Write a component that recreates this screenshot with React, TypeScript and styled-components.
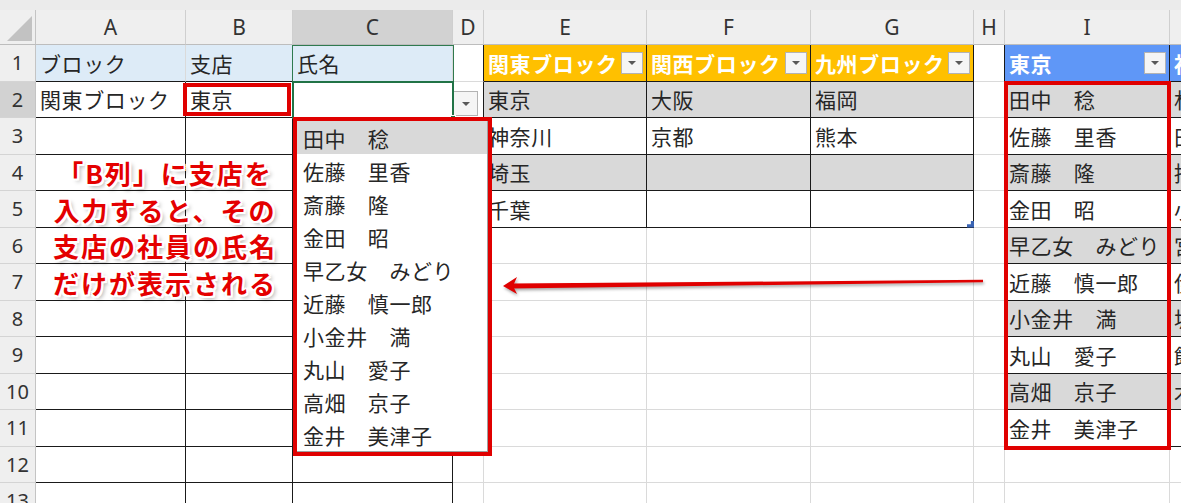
import styled, { createGlobalStyle } from 'styled-components'

// ── Sheet geometry ────────────────────────────────────────────────────────────

const COLS = ['A', 'B', 'C', 'D', 'E', 'F', 'G', 'H', 'I', 'J']
const WIDTHS = [150, 107, 160, 31, 163, 164, 163, 31, 165, 100]
const ROW_COUNT = 13
const ROW_H = 36.5
const GRID = '#dadada'
const INK = '#1a1a1a'

const NAMES = [
  '田中　稔', '佐藤　里香', '斎藤　隆', '金田　昭', '早乙女　みどり',
  '近藤　慎一郎', '小金井　満', '丸山　愛子', '高畑　京子', '金井　美津子',
]
const KANAGAWA = ['林　健太', '田村　聡', '持田　翼', '小林　舞', '宮本　翔', '伊藤　誠', '坂本　亮', '飯田　光', '木村　卓', '']

type Tone = 'blank' | 'label' | 'orange' | 'band' | 'blue'

const TONES: Record<Tone, { bg: string; fg: string; bold: boolean }> = {
  blank: { bg: '#fff', fg: '#262626', bold: false },
  label: { bg: '#ddebf7', fg: '#262626', bold: false },
  orange: { bg: '#ffc000', fg: '#fff', bold: true },
  band: { bg: '#d9d9d9', fg: '#262626', bold: false },
  blue: { bg: '#5f97f7', fg: '#fff', bold: true },
}

interface Spec { text?: string; tone?: Tone; filter?: boolean; dropdown?: boolean; handle?: boolean }

function buildCells(): Record<string, Spec> {
  const m: Record<string, Spec> = {
    A1: { text: 'ブロック', tone: 'label' },
    B1: { text: '支店', tone: 'label' },
    C1: { text: '氏名', tone: 'label' },
    A2: { text: '関東ブロック' },
    B2: { text: '東京' },
    D2: { dropdown: true },
    E1: { text: '関東ブロック', tone: 'orange', filter: true },
    F1: { text: '関西ブロック', tone: 'orange', filter: true },
    G1: { text: '九州ブロック', tone: 'orange', filter: true },
    E2: { text: '東京', tone: 'band' }, F2: { text: '大阪', tone: 'band' }, G2: { text: '福岡', tone: 'band' },
    E3: { text: '神奈川' }, F3: { text: '京都' }, G3: { text: '熊本' },
    E4: { text: '埼玉', tone: 'band' }, F4: { tone: 'band' }, G4: { tone: 'band' },
    E5: { text: '千葉' }, G5: { handle: true },
    I1: { text: '東京', tone: 'blue', filter: true },
    J1: { text: '神奈川', tone: 'blue', filter: true },
  }
  NAMES.forEach((n, i) => {
    const tone: Tone = i % 2 === 0 ? 'band' : 'blank'
    m[`I${i + 2}`] = { text: n, tone }
    m[`J${i + 2}`] = { text: KANAGAWA[i], tone }
  })
  return m
}

const CELLS = buildCells()

function boxed(c: number, r: number) {
  if (c >= 0 && c <= 2 && r >= 2) return true
  if (c >= 4 && c <= 6 && r >= 1 && r <= 5) return true
  if (c >= 8 && c <= 9 && r >= 1 && r <= 11) return true
  return false
}

// ── Styled components ─────────────────────────────────────────────────────────

const GlobalStyle = createGlobalStyle`
  *, *::before, *::after { box-sizing: border-box; }
  html, body { margin: 0; padding: 0; background: #fff; }
  body { font-family: "Noto Sans CJK JP", "Noto Sans", sans-serif; }
`

const Frame = styled.div`
  position: relative;
  width: 1194px;
  height: 503px;
  overflow: hidden;
  background: #fff;
`

const Viewport = styled.div`
  width: 1181px;
  overflow: hidden;
`

const TopStrip = styled.div`
  height: 10px;
  background: #ebebeb;
`

const Sheet = styled.div`
  display: grid;
  grid-template-columns: 36px ${WIDTHS.map(w => `${w}px`).join(' ')};
  grid-template-rows: 35px repeat(${ROW_COUNT}, ${ROW_H}px);
`

const Corner = styled.div`
  position: relative;
  background: #efefef;
  border-right: 1px solid #c4c4c4;
  border-bottom: 1px solid #bdbdbd;
  &::after {
    content: '';
    position: absolute;
    right: 3px;
    bottom: 3px;
    border-left: 25px solid transparent;
    border-bottom: 25px solid #c2c2c2;
  }
`

const ColHead = styled.div<{ $sel: boolean }>`
  display: flex;
  align-items: center;
  justify-content: center;
  background: ${p => (p.$sel ? '#d2d2d2' : '#efefef')};
  border-right: 1px solid #cfcfcf;
  border-bottom: 1px solid #bdbdbd;
  font-family: "Noto Sans", "Liberation Sans", sans-serif;
  font-size: 21px;
  color: #333;
  overflow: hidden;
`

const RowHead = styled.div<{ $sel: boolean }>`
  display: flex;
  align-items: center;
  justify-content: center;
  background: ${p => (p.$sel ? '#d2d2d2' : '#efefef')};
  border-right: 1px solid #c4c4c4;
  border-bottom: 1px solid #d4d4d4;
  font-family: "Noto Sans", "Liberation Sans", sans-serif;
  font-size: 20px;
  color: #333;
`

const Cell = styled.div<{ $bg: string; $fg: string; $bold: boolean; $r: string; $b: string; $flush: boolean; $handle: boolean }>`
  position: relative;
  display: flex;
  align-items: ${p => (p.$flush ? 'flex-end' : 'center')};
  gap: 3px;
  min-width: 0;
  overflow: ${p => (p.$handle ? 'visible' : 'hidden')};
  white-space: nowrap;
  padding: ${p => (p.$flush ? '0 0 1px 0' : '0 3px 0 4px')};
  background: ${p => p.$bg};
  color: ${p => p.$fg};
  font-weight: ${p => (p.$bold ? 700 : 400)};
  font-size: 21px;
  letter-spacing: 0.6px;
  border-right: 1px solid ${p => p.$r};
  border-bottom: 1px solid ${p => p.$b};
  ${p => p.$handle && `
    &::after {
      content: '';
      position: absolute;
      right: -1px;
      bottom: -1px;
      width: 7px;
      height: 7px;
      background: #3a64b4;
      clip-path: polygon(100% 0, 100% 100%, 0 100%, 0 55%, 55% 55%, 55% 0);
    }
  `}
`

const CellText = styled.span`
  flex: 1;
  min-width: 0;
  overflow: hidden;
`

const SmallButton = styled.span<{ $size: number }>`
  flex: none;
  width: ${p => p.$size}px;
  height: ${p => p.$size}px;
  display: flex;
  align-items: center;
  justify-content: center;
  background: #f5f5f5;
  border: 1px solid #b3b3b3;
`

const Caret = styled.span`
  width: 0;
  height: 0;
  border-left: 4.5px solid transparent;
  border-right: 4.5px solid transparent;
  border-top: 4.5px solid #595959;
`

// overlays

const Selection = styled.div`
  position: absolute;
  left: 292px;
  top: 80.5px;
  width: 162px;
  height: 38.5px;
  border: 2px solid #217346;
  pointer-events: none;
  &::after {
    content: '';
    position: absolute;
    right: -4px;
    bottom: -4px;
    width: 6px;
    height: 6px;
    background: #217346;
    border: 1px solid #fff;
  }
`

const HeaderOutline = styled.div`
  position: absolute;
  left: 292px;
  top: 45px;
  width: 162px;
  height: 37px;
  border: 1px solid #2f7a4f;
  pointer-events: none;
`

const RedFrame = styled.div`
  position: absolute;
  border: 4px solid #e00000;
  pointer-events: none;
`

const BranchMark = styled(RedFrame)`
  left: 183px;
  top: 83px;
  width: 108px;
  height: 33px;
`

const TokyoMark = styled(RedFrame)`
  left: 1004px;
  top: 81px;
  width: 167px;
  height: 369px;
`

const DropList = styled.div`
  position: absolute;
  left: 293px;
  top: 117px;
  width: 199px;
  border: 4px solid #e00000;
  background: #fff;
`

const DropInner = styled.ul`
  margin: 0;
  padding: 0;
  list-style: none;
  border-right: 1px solid #a0a0a0;
  border-bottom: 1px solid #a0a0a0;
  background: #fff;
`

const DropItem = styled.li<{ $active: boolean }>`
  height: 33px;
  display: flex;
  align-items: center;
  padding-left: 6px;
  font-size: 21px;
  letter-spacing: 0.6px;
  color: #262626;
  background: ${p => (p.$active ? '#d9d9d9' : '#fff')};
  white-space: nowrap;
`

const Note = styled.div`
  position: absolute;
  left: 36px;
  top: 155px;
  width: 258px;
  text-align: center;
  font-family: "Noto Sans CJK JP", sans-serif;
  font-size: 26px;
  font-weight: 700;
  line-height: 36.5px;
  letter-spacing: 2px;
  color: #e40000;
  white-space: nowrap;
  text-shadow:
    -2px -2px 0 #fff, 2px -2px 0 #fff, -2px 2px 0 #fff, 2px 2px 0 #fff,
    0 -2px 0 #fff, 0 2px 0 #fff, -2px 0 0 #fff, 2px 0 0 #fff,
    3px 3px 4px rgba(0, 0, 0, 0.35);
`

const NoteLine = styled.div``

const Arrow = styled.svg`
  position: absolute;
  left: 495px;
  top: 268px;
  overflow: visible;
  filter: drop-shadow(1px 2px 1.5px rgba(0, 0, 0, 0.35));
`

// ── Component ─────────────────────────────────────────────────────────────────

export default function App() {
  const rows = Array.from({ length: ROW_COUNT }, (_, i) => i + 1)

  return (
    <>
      <GlobalStyle />
      <Frame>
        <Viewport>
          <TopStrip />
          <Sheet>
            <Corner />
            {COLS.map(c => (
              <ColHead key={c} $sel={c === 'C'}>{c}</ColHead>
            ))}
            {rows.map(r => (
              <Row key={r} r={r} />
            ))}
          </Sheet>
        </Viewport>

        <HeaderOutline />
        <Selection />
        <BranchMark />
        <TokyoMark />

        <DropList>
          <DropInner>
            {NAMES.map((n, i) => (
              <DropItem key={n} $active={i === 0}>{n}</DropItem>
            ))}
          </DropInner>
        </DropList>

        <Note>
          <NoteLine>「B列」に支店を</NoteLine>
          <NoteLine>入力すると、その</NoteLine>
          <NoteLine>支店の社員の氏名</NoteLine>
          <NoteLine>だけが表示される</NoteLine>
        </Note>

        <Arrow width="495" height="30" viewBox="0 0 495 30">
          <polygon points="16,15.6 488,11.8 488,14.2 16,20.6" fill="#e00000" />
          <polygon points="8,18 22,9 18,18 22,26" fill="#e00000" />
        </Arrow>
      </Frame>
    </>
  )
}

function Row({ r }: { r: number }) {
  return (
    <>
      <RowHead $sel={r === 2}>{r}</RowHead>
      {COLS.map((c, ci) => {
        const spec = CELLS[`${c}${r}`] ?? {}
        const tone = TONES[spec.tone ?? 'blank']
        const right = boxed(ci, r) || boxed(ci + 1, r) ? INK : GRID
        const bottom = boxed(ci, r) || boxed(ci, r + 1) ? INK : GRID
        return (
          <Cell
            key={c}
            $bg={tone.bg}
            $fg={tone.fg}
            $bold={tone.bold}
            $r={right}
            $b={bottom}
            $flush={!!spec.dropdown}
            $handle={!!spec.handle}
          >
            {spec.dropdown ? (
              <SmallButton $size={25}><Caret /></SmallButton>
            ) : (
              <CellText>{spec.text}</CellText>
            )}
            {spec.filter && <SmallButton $size={22}><Caret /></SmallButton>}
          </Cell>
        )
      })}
    </>
  )
}
